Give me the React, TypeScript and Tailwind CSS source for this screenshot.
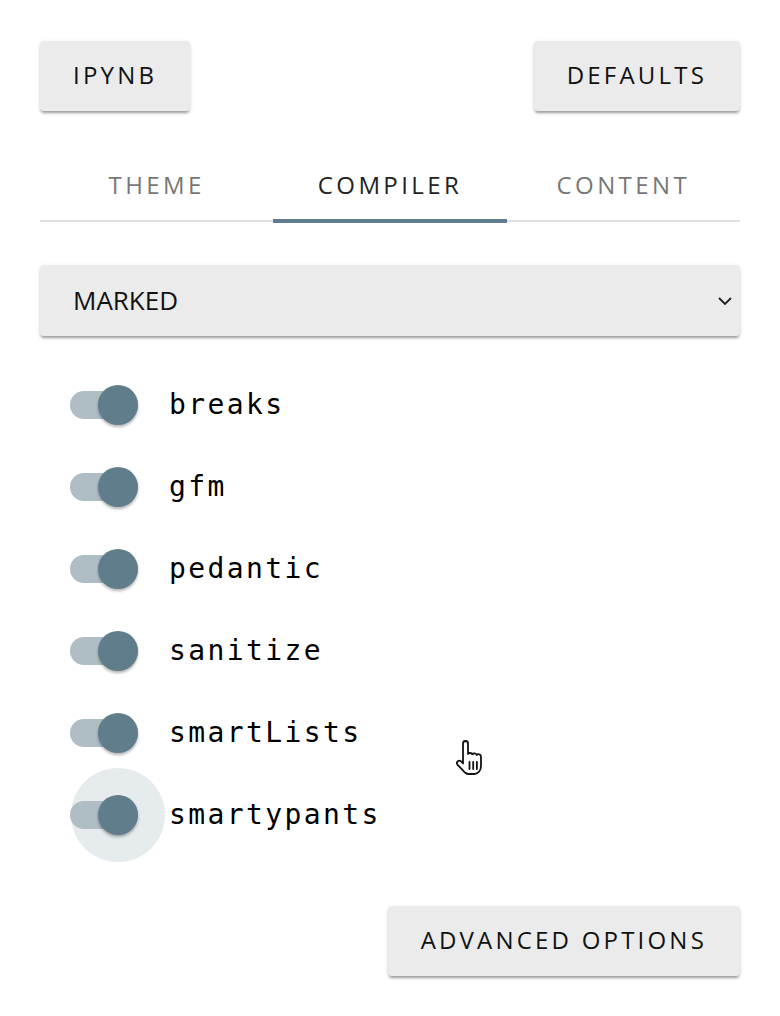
import React, { useState } from "react";

const options = ["breaks", "gfm", "pedantic", "sanitize", "smartLists", "smartypants"];

const tabs = ["THEME", "COMPILER", "CONTENT"];

const Toggle: React.FC<{ on: boolean; hover?: boolean; onClick: () => void }> = ({ on, hover, onClick }) => (
  <button onClick={onClick} className="relative w-[68px] h-[40px] flex items-center shrink-0">
    {hover && <span className="absolute left-[1px] top-[-27px] w-[94px] h-[94px] rounded-full bg-[#e6ebed]" />}
    <span className={`relative w-[68px] h-[28px] rounded-full ${on ? "bg-[#afbec5]" : "bg-[#bdbdbd]"}`} />
    <span
      className={`absolute top-0 w-[40px] h-[40px] rounded-full shadow-[0_2px_3px_rgba(0,0,0,0.3)] ${
        on ? "left-[28px] bg-[#607d8b]" : "left-0 bg-[#fafafa]"
      }`}
    />
  </button>
);

const Cursor = () => (
  <svg className="absolute left-[454px] top-[740px]" width="34" height="38" viewBox="0 0 34 38">
    <path
      d="M9 3.5c0-1.6 1.2-2.5 2.5-2.5S14 1.9 14 3.5V14c.6-1.4 3.7-1.4 4.4.4.7-1.4 3.8-1.4 4.4.6.9-1.3 4.2-1 4.2 1.5V26c0 4-2.6 8-6.6 8h-6c-2.6 0-3.6-1.2-5.2-3.3L3.4 24.6c-.9-1.2-.6-2.8.6-3.5 1.1-.7 2.4-.4 3.3.6L9 23.5z"
      fill="#fff"
      stroke="#111"
      strokeWidth="1.8"
      strokeLinejoin="round"
    />
    <path d="M15.5 22v7M19.2 22v7M22.9 22v7" stroke="#111" strokeWidth="1.8" strokeLinecap="round" />
  </svg>
);

export default function App() {
  const [active, setActive] = useState(1);
  const [values, setValues] = useState<boolean[]>(options.map(() => true));

  const btn =
    "h-[70px] px-[33px] bg-[#ebebeb] rounded-[4px] shadow-[0_3px_3px_-1px_rgba(0,0,0,0.35),0_1px_4px_rgba(0,0,0,0.1)] text-[24px] tracking-[3.2px] text-[#111] leading-none pb-[2px]";

  return (
    <div className="relative w-[780px] h-[1016px] bg-white px-[40px] pt-[41px]" style={{ fontFamily: "'Open Sans', 'Noto Sans', sans-serif" }}>
      <div className="flex justify-between">
        <button className={btn}>IPYNB</button>
        <button className={btn}>DEFAULTS</button>
      </div>

      <div className="mt-[39px] grid grid-cols-3 border-b-2 border-[#e0e0e0]">
        {tabs.map((t, i) => (
          <button
            key={t}
            onClick={() => setActive(i)}
            className={`relative h-[70px] text-[24px] tracking-[3.4px] ${i === active ? "text-[#222]" : "text-[#777]"}`}
          >
            {t}
            {i === active && <span className="absolute left-0 right-0 bottom-[-3px] h-[4px] bg-[#607d8b]" />}
          </button>
        ))}
      </div>

      <div className="mt-[43px] h-[71px] bg-[#ebebeb] rounded-[4px] shadow-[0_3px_3px_-1px_rgba(0,0,0,0.35),0_1px_4px_rgba(0,0,0,0.1)] flex items-center justify-between pl-[33px] pr-[5px] text-[26px] text-[#111]">
        <span>MARKED</span>
        <svg width="20" height="20" viewBox="0 0 20 20">
          <path d="M4 7l6 6 6-6" fill="none" stroke="#222" strokeWidth="1.8" />
        </svg>
      </div>

      <div className="mt-[28px] flex flex-col">
        {options.map((o, i) => (
          <div key={o} className="h-[82px] flex items-center pl-[30px]">
            <Toggle
              on={values[i]}
              hover={i === options.length - 1}
              onClick={() => setValues(values.map((v, j) => (j === i ? !v : v)))}
            />
            <span
              className="relative ml-[31px] text-[28px] tracking-[2.4px] text-black"
              style={{ fontFamily: "'DejaVu Sans Mono', monospace" }}
            >
              {o}
            </span>
          </div>
        ))}
      </div>

      <div className="mt-[50px] flex justify-end">
        <button className={btn}>ADVANCED OPTIONS</button>
      </div>

      <Cursor />
    </div>
  );
}
